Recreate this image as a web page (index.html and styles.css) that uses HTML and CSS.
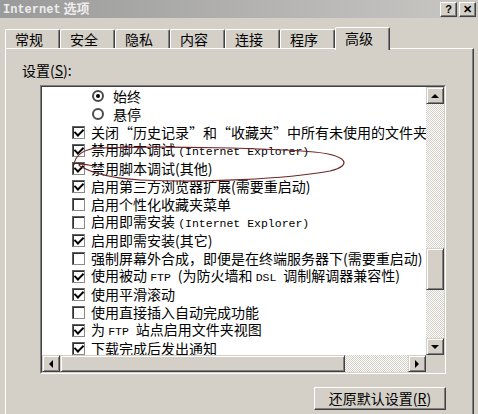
FILE: index.html
```html
<!DOCTYPE html>
<html lang="zh-CN">
<head>
    <meta charset="UTF-8">
    <title>Internet 选项</title>
    <link rel="stylesheet" href="styles.css">
</head>
<body>
<div class="window">
    <div class="titlebar">
        <span class="title"><span class="en-title">Internet</span> 选项</span>
        <div class="title-btns">
            <span class="tbtn">?</span>
            <span class="tbtn">✕</span>
        </div>
    </div>

    <div class="tabs">
        <div class="tab">常规</div>
        <div class="tab">安全</div>
        <div class="tab">隐私</div>
        <div class="tab">内容</div>
        <div class="tab">连接</div>
        <div class="tab">程序</div>
        <div class="tab active">高级</div>
    </div>

    <div class="panel">
        <div class="caption">设置(<u>S</u>):</div>

        <div class="listbox">
            <div class="listbox-inner">
                <div class="list">
                    <div class="item sub"><span class="radio on"></span><span class="text">始终</span></div>
                    <div class="item sub"><span class="radio"></span><span class="text">悬停</span></div>
                    <div class="item"><span class="cb on"></span><span class="text">关闭“历史记录”和“收藏夹”中所有未使用的文件夹(需要重启动)</span></div>
                    <div class="item"><span class="cb on"></span><span class="text">禁用脚本调试 <span class="en">(Internet Explorer)</span></span></div>
                    <div class="item"><span class="cb on"></span><span class="text">禁用脚本调试(其他)</span></div>
                    <div class="item"><span class="cb on"></span><span class="text">启用第三方浏览器扩展(需要重启动)</span></div>
                    <div class="item"><span class="cb"></span><span class="text">启用个性化收藏夹菜单</span></div>
                    <div class="item"><span class="cb"></span><span class="text">启用即需安装 <span class="en">(Internet Explorer)</span></span></div>
                    <div class="item"><span class="cb on"></span><span class="text">启用即需安装(其它)</span></div>
                    <div class="item"><span class="cb"></span><span class="text">强制屏幕外合成，即便是在终端服务器下(需要重启动)</span></div>
                    <div class="item"><span class="cb on"></span><span class="text">使用被动 <span class="en">FTP </span>(为防火墙和 <span class="en">DSL </span>调制解调器兼容性)</span></div>
                    <div class="item"><span class="cb on"></span><span class="text">使用平滑滚动</span></div>
                    <div class="item"><span class="cb"></span><span class="text">使用直接插入自动完成功能</span></div>
                    <div class="item"><span class="cb on"></span><span class="text">为 <span class="en">FTP </span>站点启用文件夹视图</span></div>
                    <div class="item"><span class="cb on"></span><span class="text">下载完成后发出通知</span></div>
                </div>

                <div class="vscroll">
                    <div class="arrow"><span class="tri up"></span></div>
                    <div class="vtrack"><div class="thumb vthumb"></div></div>
                    <div class="arrow"><span class="tri down"></span></div>
                </div>

                <div class="hscroll">
                    <div class="arrow"><span class="tri left"></span></div>
                    <div class="thumb hthumb"></div>
                    <div class="htrack"></div>
                    <div class="arrow"><span class="tri right"></span></div>
                </div>

                <div class="corner"></div>
            </div>

            <!-- 手画的圈 -->
            <svg class="mark" width="406" height="289" viewBox="0 0 406 289">
                <path d="M34 80 C35 70 44 64 58 63 C130 61 228 63 274 67 C306 70 314 80 290 86 C246 94 162 98 100 95 C70 93 50 87 40 81 C36 78 44 79 54 81"
                      fill="none" stroke="#6e2626" stroke-width="1.2"/>
            </svg>
        </div>

        <div class="actions">
            <button class="btn">还原默认设置(<u>R</u>)</button>
        </div>
    </div>
</div>
</body>
</html>
```

FILE: styles.css
```css
* {
    box-sizing: border-box;
}
body {
    margin: 0;
    background: #d4d0c8;
    font-family: "Noto Sans CJK SC", sans-serif;
    font-size: 14px;
    color: #000;
}
.window {
    width: 478px;
    height: 414px;
    overflow: hidden;
}

/* 标题栏 */
.titlebar {
    height: 18px;
    display: flex;
    justify-content: space-between;
    align-items: center;
    padding: 0 2px 0 3px;
    background: linear-gradient(to right, #9a9a9a, #c8c7c4);
}
.title {
    color: #ececec;
    font-weight: bold;
    font-size: 13px;
    line-height: 18px;
}
.en-title {
    font-family: "Liberation Mono", monospace;
    font-size: 12px;
}
.title-btns {
    display: flex;
    gap: 2px;
}
.tbtn {
    width: 17px;
    height: 15px;
    display: flex;
    align-items: center;
    justify-content: center;
    background: #d4d0c8;
    border: 1px solid;
    border-color: #fff #404040 #404040 #fff;
    box-shadow: inset -1px -1px #808080;
    font: bold 11px "Liberation Sans", sans-serif;
}

/* 选项卡 */
.tabs {
    display: flex;
    align-items: flex-end;
    height: 21px;
    margin-top: 9px;
    padding-left: 5px;
}
.tab {
    width: 55px;
    height: 19px;
    padding-left: 9px;
    line-height: 18px;
    background: #d4d0c8;
    border-top: 1px solid #fff;
    border-left: 1px solid #fff;
    border-right: 1px solid #404040;
    border-radius: 2px 2px 0 0;
    box-shadow: inset -1px 0 #808080;
}
.tab.active {
    height: 23px;
    margin-bottom: -2px;
    position: relative;
    z-index: 1;
    padding-top: 1px;
}

.panel {
    width: 469px;
    height: 380px;
    margin-left: 5px;
    padding: 12px 0 0 16px;
    border-top: 1px solid #fff;
    border-left: 1px solid #fff;
    border-right: 1px solid #404040;
    box-shadow: inset -1px 0 #808080;
}
.caption {
    line-height: 18px;
}

/* 列表框 */
.listbox {
    position: relative;
    width: 406px;
    height: 289px;
    margin: 6px 0 0 18px;
    border: 1px solid;
    border-color: #808080 #fff #fff #808080;
}
.listbox-inner {
    height: 100%;
    display: grid;
    grid-template-columns: 384px 18px;
    grid-template-rows: 268px 17px;
    border: 1px solid;
    border-color: #404040 #d4d0c8 #d4d0c8 #404040;
}
.list {
    background: #fff;
    overflow: hidden;
}
.item {
    display: flex;
    align-items: center;
    height: 18px;
    padding-left: 30px;
    white-space: nowrap;
    line-height: 18px;
}
.item.sub {
    padding-left: 50px;
}
.text {
    white-space: pre;
}
.en {
    font-family: "Liberation Mono", monospace;
    font-size: 11.5px;
}
.cb {
    flex: none;
    width: 13px;
    height: 13px;
    margin-right: 6px;
    display: flex;
    align-items: center;
    justify-content: center;
    border: 1px solid;
    border-color: #606060 #8a8a8a #8a8a8a #606060;
    box-shadow: inset 1px 1px #303030;
    background: #fff;
}
.cb.on::after {
    content: "";
    width: 4px;
    height: 7px;
    margin: -2px 0 0 1px;
    border-right: 2px solid #000;
    border-bottom: 2px solid #000;
    transform: rotate(45deg);
}
.radio {
    flex: none;
    width: 12px;
    height: 12px;
    margin-right: 9px;
    display: flex;
    align-items: center;
    justify-content: center;
    border-radius: 50%;
    border: 2px solid #4a4a4a;
    background: #fff;
}
.radio.on::after {
    content: "";
    width: 4px;
    height: 4px;
    border-radius: 50%;
    background: #000;
}

/* 滚动条 */
.vscroll {
    display: flex;
    flex-direction: column;
}
.hscroll {
    display: flex;
}
.arrow {
    flex: none;
    width: 18px;
    height: 17px;
    display: flex;
    align-items: center;
    justify-content: center;
    background: #d4d0c8;
    border: 1px solid;
    border-color: #d4d0c8 #404040 #404040 #d4d0c8;
    box-shadow: inset 1px 1px #fff, inset -1px -1px #808080;
}
.thumb {
    background: #d4d0c8;
    border: 1px solid;
    border-color: #d4d0c8 #404040 #404040 #d4d0c8;
    box-shadow: inset 1px 1px #fff, inset -1px -1px #808080;
}
.vtrack, .htrack {
    flex: 1;
    background: repeating-conic-gradient(#fff 0 25%, #d4d0c8 0 50%) 0 0 / 2px 2px;
}
.vtrack {
    padding-top: 144px;
}
.vthumb {
    height: 42px;
}
.hthumb {
    flex: none;
    width: 285px;
}
.tri {
    width: 0;
    height: 0;
    border: 4px solid transparent;
}
.tri.up {
    border-top: 0;
    border-bottom-color: #000;
}
.tri.down {
    border-bottom: 0;
    border-top-color: #000;
}
.tri.left {
    border-left: 0;
    border-right-color: #000;
}
.tri.right {
    border-right: 0;
    border-left-color: #000;
}
.corner {
    background: #d4d0c8;
}

.mark {
    position: absolute;
    left: -1px;
    top: -1px;
    pointer-events: none;
}

.actions {
    width: 406px;
    margin: 13px 0 0 18px;
    display: flex;
    justify-content: flex-end;
}
.btn {
    width: 132px;
    height: 23px;
    padding: 0;
    font-family: "Noto Sans CJK SC", sans-serif;
    font-size: 14px;
    line-height: 19px;
    color: #000;
    background: #d4d0c8;
    border: 1px solid;
    border-color: #fff #404040 #404040 #fff;
    box-shadow: inset -1px -1px #808080;
}
```
